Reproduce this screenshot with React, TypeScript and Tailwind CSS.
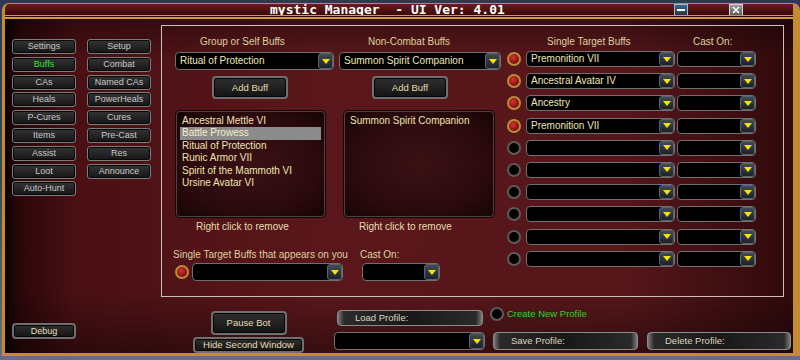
import React from "react";

const FONT = "font-['Liberation_Sans',Arial,sans-serif]";

function SideBtn({ label, active }: { label: string; active?: boolean }) {
  return (
    <div
      className={`flex h-[15px] w-[64px] items-center justify-center rounded-[3px] border border-[#7c7c7c] bg-[linear-gradient(#343434,#151515)] text-[9px] leading-none shadow-[inset_0_0_0_1px_#080808] ${active ? "text-[#2ee42e]" : "text-[#c9c9c9]"}`}
    >
      {label}
    </div>
  );
}

function Arrow() {
  return (
    <div className="flex h-full w-[15px] shrink-0 items-center justify-center rounded-[3px] border border-[#5c636b] bg-[linear-gradient(#414b56,#1b2128)]">
      <svg width="8" height="5" viewBox="0 0 8 5">
        <path d="M0 0H8L4 5Z" fill="#f4e400" />
      </svg>
    </div>
  );
}

function Dropdown({ cls, text }: { cls: string; text?: string }) {
  return (
    <div className={`${cls} flex shrink-0 rounded-[4px] border border-[#707070] bg-black`}>
      <div className="flex min-w-0 flex-1 items-center truncate pl-[4px] text-[10px] leading-none text-[#efe6b4]">
        {text}
      </div>
      <Arrow />
    </div>
  );
}

function Radio({ on }: { on?: boolean }) {
  return on ? (
    <div className="h-[14px] w-[14px] shrink-0 rounded-full border-2 border-[#b88e34] bg-[radial-gradient(circle_at_40%_35%,#d83434,#7a0a0a_75%)]" />
  ) : (
    <div className="h-[14px] w-[14px] shrink-0 rounded-full border-2 border-[#5c5c5c] bg-black" />
  );
}

function BigBtn({ cls, label }: { cls: string; label: string }) {
  return (
    <div
      className={`${cls} flex shrink-0 items-center justify-center rounded-[4px] border-2 border-[#6f6f6f] bg-[linear-gradient(#2f2f2f,#131313)] text-[9.5px] leading-none text-[#e6ddb2] shadow-[inset_0_0_0_1px_#050505]`}
    >
      {label}
    </div>
  );
}

function ProfileBtn({ cls, label }: { cls: string; label: string }) {
  return (
    <div
      className={`${cls} flex shrink-0 items-center rounded-[4px] border border-[#8c8c8c] bg-[linear-gradient(90deg,#7a7a7a_0px,#2a2a2a_6px,#181818_50%,#2a2a2a_calc(100%-6px),#7a7a7a_100%)] pl-[17px] text-[9.5px] leading-none text-[#ddd5bd]`}
    >
      {label}
    </div>
  );
}

function List({ cls, items, selected }: { cls: string; items: string[]; selected?: number }) {
  return (
    <div
      className={`${cls} shrink-0 rounded-[4px] border border-[#4c4242] bg-[radial-gradient(ellipse_at_center,#3a1115_0%,#2b0a0d_65%,#170405_100%)] pt-[3px] shadow-[0_0_0_1px_#160404]`}
    >
      {items.map((it, i) => (
        <div
          key={it}
          className={`mx-[3px] h-[12.4px] truncate pl-[2px] text-[10px] leading-[12.4px] ${i === selected ? "bg-[#8b8b8b] text-[#f6eec6]" : "text-[#efe5ae]"}`}
        >
          {it}
        </div>
      ))}
    </div>
  );
}

const sideButtons = [
  ["Settings", "Setup"],
  ["Buffs", "Combat"],
  ["CAs", "Named CAs"],
  ["Heals", "PowerHeals"],
  ["P-Cures", "Cures"],
  ["Items", "Pre-Cast"],
  ["Assist", "Res"],
  ["Loot", "Announce"],
  ["Auto-Hunt", ""],
];

const singleTargets = [
  "Premonition VII",
  "Ancestral Avatar IV",
  "Ancestry",
  "Premonition VII",
  "",
  "",
  "",
  "",
  "",
  "",
];

export default function App() {
  return (
    <div className={`h-[360px] w-[800px] overflow-hidden bg-[linear-gradient(#2c3a58,#3c4658_50%,#6a6e78)] pl-[2px] pt-[3px] ${FONT}`}>
      <div className="flex h-[353px] w-[798px] flex-col overflow-hidden rounded-t-[7px] border-x-[3px] border-b-[3px] border-t border-[#c48c2e] border-r-[7px]">
        {/* title bar */}
        <div className="flex h-[11px] shrink-0 items-center bg-[linear-gradient(#6a1c1c,#3a0808)]">
          <div className="w-[669px] shrink-0 whitespace-pre pl-[265px] font-['DejaVu_Sans_Mono',monospace] text-[13px] font-bold leading-[12px] text-white">
            mystic Manager  - UI Ver: 4.01
          </div>
          <div className="flex h-[12px] w-[14px] shrink-0 items-center justify-center border border-[#a8b4c8] bg-[linear-gradient(#4a6088,#24344e)]">
            <div className="h-[2px] w-[8px] bg-white" />
          </div>
          <div className="ml-[41px] flex h-[12px] w-[14px] shrink-0 items-center justify-center border border-[#d0d0d0] bg-[linear-gradient(#9a9a9a,#5a5a5a)]">
            <svg width="8" height="8" viewBox="0 0 8 8">
              <path d="M1 1L7 7M7 1L1 7" stroke="white" strokeWidth="1.6" />
            </svg>
          </div>
        </div>
        <div className="h-[4px] shrink-0 border-b-2 border-t border-[#d29a38] bg-[#2a0a06]" />

        {/* body */}
        <div className="flex h-[334px] flex-col bg-[linear-gradient(180deg,rgba(0,0,0,0.35),transparent_12%,transparent_82%,rgba(0,0,0,0.4)),linear-gradient(90deg,#0c0202_0px,#2a0709_14px,#4a1014_70px,#5a171b_320px,#56161a_620px,#300a0c_787px)]">
          <div className="flex h-[278px] shrink-0">
            {/* sidebar */}
            <div className="w-[156px] shrink-0 pl-[7px] pt-[20px]">
              <div className="grid grid-cols-[64px_64px] gap-x-[11px] gap-y-[2.8px]">
                {sideButtons.flat().map((b, i) =>
                  b ? <SideBtn key={i} label={b} active={b === "Buffs"} /> : <div key={i} />
                )}
              </div>
            </div>

            {/* main panel */}
            <div className="mt-[6px] flex h-[272px] w-[623px] shrink-0 border border-[#cdbdbd]">
              <div className="ml-[13px] flex flex-col">
                <div className="flex">
                  {/* group or self */}
                  <div className="flex w-[159px] flex-col pt-[10px]">
                    <div className="h-[12px] whitespace-nowrap pl-[25px] text-[10px] leading-[12px] text-[#dcd29c]">
                      Group or Self Buffs
                    </div>
                    <Dropdown cls="mt-[4px] h-[18px] w-[159px]" text="Ritual of Protection" />
                    <BigBtn cls="ml-[37px] mt-[6px] h-[23px] w-[76px]" label="Add Buff" />
                    <List
                      cls="ml-[1px] mt-[12px] h-[106px] w-[149px]"
                      items={[
                        "Ancestral Mettle VI",
                        "Battle Prowess",
                        "Ritual of Protection",
                        "Runic Armor VII",
                        "Spirit of the Mammoth VI",
                        "Ursine Avatar VI",
                      ]}
                      selected={1}
                    />
                    <div className="mt-[4px] h-[12px] whitespace-nowrap pl-[21px] text-[10px] leading-[12px] text-[#e6ddb0]">
                      Right click to remove
                    </div>
                  </div>
                  {/* non-combat */}
                  <div className="ml-[5px] flex w-[162px] flex-col pt-[10px]">
                    <div className="h-[12px] whitespace-nowrap pl-[29px] text-[10px] leading-[12px] text-[#dcd29c]">
                      Non-Combat Buffs
                    </div>
                    <Dropdown cls="mt-[4px] h-[18px] w-[162px]" text="Summon Spirit Companion" />
                    <BigBtn cls="ml-[33px] mt-[6px] h-[23px] w-[76px]" label="Add Buff" />
                    <List cls="ml-[5px] mt-[12px] h-[106px] w-[150px]" items={["Summon Spirit Companion"]} />
                    <div className="mt-[4px] h-[12px] whitespace-nowrap pl-[20px] text-[10px] leading-[12px] text-[#e6ddb0]">
                      Right click to remove
                    </div>
                  </div>
                </div>

                {/* appears on you */}
                <div className="mt-[16px] flex">
                  <div className="flex w-[168px] flex-col">
                    <div className="-ml-[2px] h-[12px] whitespace-nowrap text-[10px] leading-[12px] text-[#dcd29c]">
                      Single Target Buffs that appears on you
                    </div>
                    <div className="mt-[2px] flex items-center">
                      <Radio on />
                      <Dropdown cls="ml-[3px] h-[18px] w-[151px]" />
                    </div>
                  </div>
                  <div className="ml-[17px] flex flex-col">
                    <div className="h-[12px] whitespace-nowrap text-[10px] leading-[12px] text-[#dcd29c]">Cast On:</div>
                    <Dropdown cls="ml-[2px] mt-[2px] h-[18px] w-[78px]" />
                  </div>
                </div>
              </div>

              {/* single target */}
              <div className="ml-[6px] flex flex-col pt-[10px]">
                <div className="flex h-[12px] text-[10px] leading-[12px] text-[#dcd29c]">
                  <div className="w-[168px] whitespace-nowrap pl-[40px]">Single Target Buffs</div>
                  <div className="ml-[18px] whitespace-nowrap">Cast On:</div>
                </div>
                <div className="mt-[3px] flex flex-col gap-y-[6.2px]">
                  {singleTargets.map((t, i) => (
                    <div key={i} className="flex h-[16px] items-center">
                      <Radio on={i < 4} />
                      <Dropdown cls="ml-[5px] h-[16px] w-[149px]" text={t} />
                      <Dropdown cls="ml-[2px] h-[16px] w-[79px]" />
                    </div>
                  ))}
                </div>
              </div>
            </div>
          </div>

          {/* bottom controls */}
          <div className="flex h-[56px] shrink-0 items-start">
            <BigBtn cls="ml-[7px] mt-[26px] h-[16px] w-[64px] !text-[9px]" label="Debug" />
            <div className="ml-[117px] flex w-[111px] flex-col items-center">
              <BigBtn cls="mt-[14px] h-[24px] w-[76px]" label="Pause Bot" />
              <BigBtn cls="mt-[2px] h-[16px] w-[111px]" label="Hide Second Window" />
            </div>
            <div className="ml-[30px] flex w-[151px] flex-col">
              <ProfileBtn cls="ml-[3px] mt-[13px] h-[16px] w-[146px]" label="Load Profile:" />
              <Dropdown cls="mt-[6px] h-[18px] w-[151px]" />
            </div>
            <div className="ml-[5px] flex flex-col">
              <div className="mt-[10px] flex h-[14px] items-center">
                <Radio />
                <span className="ml-[3px] whitespace-nowrap text-[9.5px] leading-none text-[#2ad42a]">Create New Profile</span>
              </div>
              <ProfileBtn cls="ml-[3px] mt-[11px] h-[18px] w-[145px]" label="Save Profile:" />
            </div>
            <ProfileBtn cls="ml-[9px] mt-[35px] h-[18px] w-[144px]" label="Delete Profile:" />
          </div>
        </div>
      </div>
    </div>
  );
}
